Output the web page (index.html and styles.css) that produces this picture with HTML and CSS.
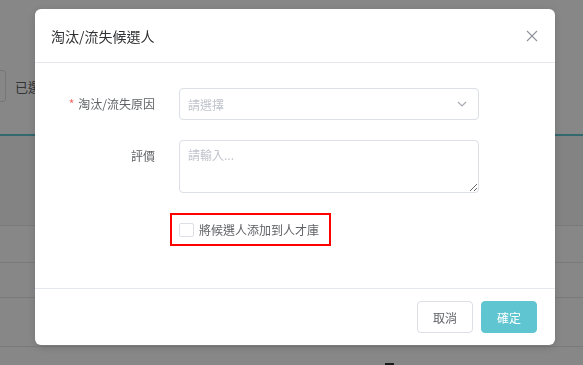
FILE: index.html
```html
<!DOCTYPE html>
<html lang="zh-Hant">
<head>
    <meta charset="UTF-8">
    <meta name="viewport" content="width=device-width, initial-scale=1.0">
    <title>淘汰/流失候選人</title>
    <link rel="stylesheet" href="styles.css">
</head>
<body>
    <div class="page">
        <div class="topbar"></div>
        <div class="toolbar">
            <span class="tool-btn"></span>
            <span class="tool-text">已選擇 0 人</span>
        </div>
        <div class="table">
            <div class="row row-head"></div>
            <div class="row row-a"></div>
            <div class="row row-b"></div>
            <div class="row row-c"></div>
            <div class="row row-d"><span class="row-mark"></span></div>
        </div>
    </div>

    <div class="mask"></div>

    <div class="dialog">
        <div class="dialog-header">
            <span class="dialog-title">淘汰/流失候選人</span>
            <button class="dialog-close" aria-label="close">
                <svg width="12" height="12" viewBox="0 0 12 12">
                    <path d="M1 1 L11 11 M11 1 L1 11" stroke="#909399" stroke-width="1.1" fill="none"/>
                </svg>
            </button>
        </div>
        <div class="dialog-body">
            <div class="form-item">
                <label class="form-label"><span class="required">*</span>淘汰/流失原因</label>
                <div class="select">
                    <span class="placeholder">請選擇</span>
                    <svg class="arrow" width="10" height="6" viewBox="0 0 10 6">
                        <path d="M1 1 L5 5 L9 1" stroke="#a8abb2" stroke-width="1.2" fill="none"/>
                    </svg>
                </div>
            </div>
            <div class="form-item">
                <label class="form-label">評價</label>
                <textarea class="textarea" placeholder="請輸入..."></textarea>
            </div>
            <div class="form-item">
                <span class="form-label"></span>
                <label class="check-wrap">
                    <span class="checkbox"></span>
                    <span class="check-text">將候選人添加到人才庫</span>
                </label>
            </div>
        </div>
        <div class="dialog-footer">
            <button class="btn">取消</button>
            <button class="btn btn-primary">確定</button>
        </div>
    </div>
</body>
</html>
```

FILE: styles.css
```css
body {
    margin: 0;
    font-family: "Noto Sans CJK TC", "Noto Sans", sans-serif;
    overflow: hidden;
}
.page {
    height: 365px;
    overflow: hidden;
    background-color: #f0f2f5;
}
.topbar {
    height: 42px;
    background-color: #fff;
}
.toolbar {
    height: 92px;
    display: flex;
    align-items: center;
    gap: 9px;
    border-bottom: 2px solid #5fc5d0;
    background-color: #fff;
}
.tool-btn {
    width: 5px;
    height: 30px;
    margin-top: -4px;
    border: 1px solid #dcdfe6;
    border-left: none;
    border-radius: 0 4px 4px 0;
}
.tool-text {
    margin-top: -4px;
    font-size: 13px;
    color: #606266;
}
.row {
    border-bottom: 1px solid #e4e7ed;
    background-color: #fff;
    box-sizing: border-box;
}
.row-head { height: 90px; background-color: #f7f8fa; }
.row-a { height: 37px; }
.row-b { height: 35px; }
.row-c { height: 49px; }
.row-d {
    height: 19px;
    position: relative;
}
.row-mark {
    position: absolute;
    left: 385px;
    top: 16px;
    width: 9px;
    height: 3px;
    background-color: #303133;
}
.mask {
    position: fixed;
    inset: 0;
    background-color: rgba(0, 0, 0, 0.47);
}
.dialog {
    position: fixed;
    left: 35px;
    top: 9px;
    width: 520px;
    background-color: #fff;
    border-radius: 6px;
    box-shadow: 0 2px 10px rgba(0, 0, 0, 0.15);
}
.dialog-header {
    height: 54px;
    padding: 0 16px;
    display: flex;
    align-items: center;
    justify-content: space-between;
    border-bottom: 1px solid #e4e7ed;
    box-sizing: border-box;
}
.dialog-title {
    font-size: 14px;
    color: #303133;
}
.dialog-close {
    border: none;
    background: none;
    padding: 0;
    margin-right: 1px;
    margin-top: 1px;
    display: flex;
}
.dialog-body {
    padding: 25px 16px 20px;
    height: 225px;
    box-sizing: border-box;
}
.form-item {
    display: flex;
    align-items: flex-start;
    margin-bottom: 20px;
}
.form-item:last-child {
    margin-top: 3px;
}
.form-label {
    width: 128px;
    padding-right: 24px;
    box-sizing: border-box;
    text-align: right;
    font-size: 12px;
    line-height: 32px;
    color: #606266;
    flex-shrink: 0;
}
.required {
    color: #f56c6c;
    margin-right: 4px;
}
.select {
    width: 300px;
    height: 32px;
    border: 1px solid #dcdfe6;
    border-radius: 4px;
    box-sizing: border-box;
    display: flex;
    align-items: center;
    justify-content: space-between;
    padding: 0 10px 0 8px;
}
.placeholder {
    font-size: 12px;
    color: #c0c4cc;
}
.arrow {
    margin-right: 1px;
}
.textarea {
    width: 300px;
    height: 53px;
    border: 1px solid #dcdfe6;
    border-radius: 4px;
    box-sizing: border-box;
    padding: 5px 8px;
    font-family: inherit;
    font-size: 12px;
    color: #606266;
    margin: 0;
    display: block;
}
.textarea::placeholder {
    color: #c0c4cc;
}
.check-wrap {
    display: flex;
    align-items: center;
    gap: 5px;
    height: 33px;
    width: 161px;
    margin-left: -9px;
    padding-left: 7px;
    border: 2px solid #ff0000;
    box-sizing: border-box;
}
.checkbox {
    width: 15px;
    height: 14px;
    border: 1px solid #dcdfe6;
    border-radius: 2px;
    box-sizing: border-box;
    background-color: #fff;
}
.check-text {
    font-size: 12px;
    color: #606266;
}
.dialog-footer {
    display: flex;
    justify-content: flex-end;
    gap: 8px;
    padding: 12px 18px 12px;
    border-top: 1px solid #e4e7ed;
}
.btn {
    width: 56px;
    height: 32px;
    border: 1px solid #dcdfe6;
    border-radius: 4px;
    background-color: #fff;
    font-family: inherit;
    font-size: 12px;
    color: #606266;
    padding: 0;
}
.btn-primary {
    background-color: #5fc5d0;
    border-color: #5fc5d0;
    color: #fff;
}
```
